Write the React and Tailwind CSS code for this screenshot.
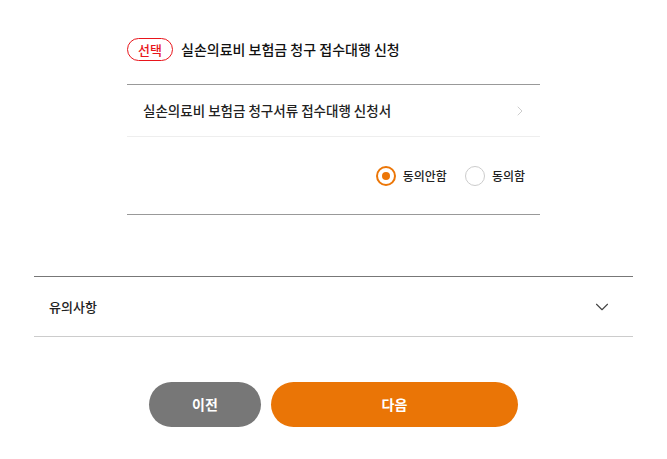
import { ChevronRight, ChevronDown } from 'lucide-react'

const font = { fontFamily: '"Noto Sans CJK KR", "Noto Sans", sans-serif' }

function Radio({ checked, label }) {
  return (
    <label className="flex items-center gap-[7px] text-[12px] font-medium text-[#222]">
      {checked ? (
        <span className="flex h-[20px] w-[20px] items-center justify-center rounded-full border-[2px] border-[#ec7607]">
          <span className="h-[8px] w-[8px] rounded-full bg-[#ec7607]" />
        </span>
      ) : (
        <span className="h-[20px] w-[20px] rounded-full border border-[#ccc]" />
      )}
      {label}
    </label>
  )
}

export default function App() {
  return (
    <div className="min-h-[459px] w-full bg-white pt-[38px]" style={font}>
      {/* 약관 동의 */}
      <section className="mx-auto w-[413px]">
        <div className="flex h-[23px] items-center gap-[8px]">
          <span className="flex h-[23px] w-[46px] items-center justify-center rounded-full border border-[#e8151b] text-[13px] font-medium text-[#e8151b]">
            선택
          </span>
          <h2 className="text-[14px] font-medium text-[#111]">실손의료비 보험금 청구 접수대행 신청</h2>
        </div>

        <div className="mt-[23px] border-t border-[#999]">
          <button className="flex h-[52px] w-full items-center justify-between border-b border-[#eee] pl-[16px] pr-[12px] text-left">
            <span className="text-[13.5px] font-medium text-[#222]">실손의료비 보험금 청구서류 접수대행 신청서</span>
            <ChevronRight size={16} strokeWidth={1.1} className="text-[#bbb]" />
          </button>
          <div className="flex h-[78px] items-center justify-end gap-[18px] border-b border-[#999] pr-[15px]">
            <Radio checked label="동의안함" />
            <Radio label="동의함" />
          </div>
        </div>
      </section>

      {/* 유의사항 */}
      <section className="mx-auto mt-[61px] w-[599px] border-t border-[#777]">
        <button className="flex h-[60px] w-full items-center justify-between border-b border-[#ccc] pl-[15px] pr-[20px]">
          <span className="text-[13px] font-medium text-[#222]">유의사항</span>
          <ChevronDown size={22} strokeWidth={1.2} className="text-[#444]" />
        </button>
      </section>

      <div className="mt-[45px] flex justify-center gap-[10px]">
        <button className="h-[45px] w-[112px] rounded-full bg-[#777] text-[14px] font-bold text-white">이전</button>
        <button className="h-[45px] w-[247px] rounded-full bg-[#ea7506] text-[14px] font-bold text-white">다음</button>
      </div>
    </div>
  )
}
